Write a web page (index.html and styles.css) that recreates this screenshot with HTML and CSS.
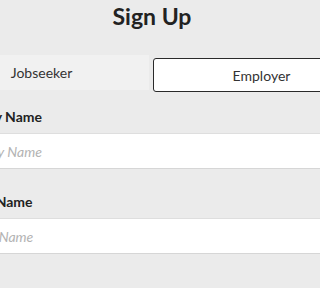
FILE: index.html
```html
<!DOCTYPE html>
<html lang="en">
<head>
<meta charset="utf-8">
<title>Sign Up</title>
<link rel="stylesheet" href="styles.css">
</head>
<body>
<div class="viewport">
  <div class="page">
    <h1 class="title">Sign Up</h1>
    <div class="tabs">
      <button class="tab tab-inactive" type="button">Jobseeker</button>
      <button class="tab tab-active" type="button">Employer</button>
    </div>
    <form class="fields">
      <div class="field">
        <label class="label" for="company">Company Name</label>
        <input class="input" id="company" type="text" placeholder="Company Name">
      </div>
      <div class="field">
        <label class="label" for="contact">Contact Name</label>
        <input class="input" id="contact" type="text" placeholder="Contact Name">
      </div>
    </form>
  </div>
</div>
</body>
</html>
```
FILE: styles.css
```css
html, body {
  margin: 0;
  padding: 0;
  background: #ebebeb;
}
body {
  font-family: Lato, "Open Sans", sans-serif;
  color: #222;
}
.viewport {
  width: 100vw;
  height: 100vh;
  overflow: hidden;
}
.page {
  width: 436px;
  margin-left: -66px;
}
.title {
  margin: 0;
  padding-top: 3px;
  font-size: 23px;
  line-height: 26px;
  font-weight: 700;
  text-align: center;
  color: #222;
}
.tabs {
  display: flex;
  align-items: flex-start;
  gap: 4px;
  margin-top: 26px;
}
.tab {
  flex: 1;
  font-family: Lato, sans-serif;
  font-size: 14px;
  color: #333;
  text-align: center;
  padding: 0;
  margin: 0;
  cursor: pointer;
}
.tab-inactive {
  height: 35px;
  background: #f1f1f1;
  border: none;
}
.tab-active {
  margin-top: 3px;
  height: 34px;
  background: #fff;
  border: 1px solid #2a2a2a;
  border-radius: 3px;
}
.fields {
  margin: 0;
  padding: 0 9px;
}
.field {
  display: flex;
  flex-direction: column;
  padding-top: 16px;
}
.field + .field {
  padding-top: 24px;
}
.label {
  font-size: 14px;
  line-height: 17px;
  font-weight: 700;
  color: #222;
}
.input {
  margin-top: 8px;
  height: 36px;
  box-sizing: border-box;
  border: none;
  border-top: 1px solid #dedede;
  border-bottom: 1px solid #d6d6d6;
  background: #fff;
  padding: 0 0 0 6px;
  font-family: Lato, sans-serif;
  font-size: 14px;
  color: #222;
  outline: none;
}
.input::placeholder {
  color: #b3b3b3;
  font-style: italic;
}
```
